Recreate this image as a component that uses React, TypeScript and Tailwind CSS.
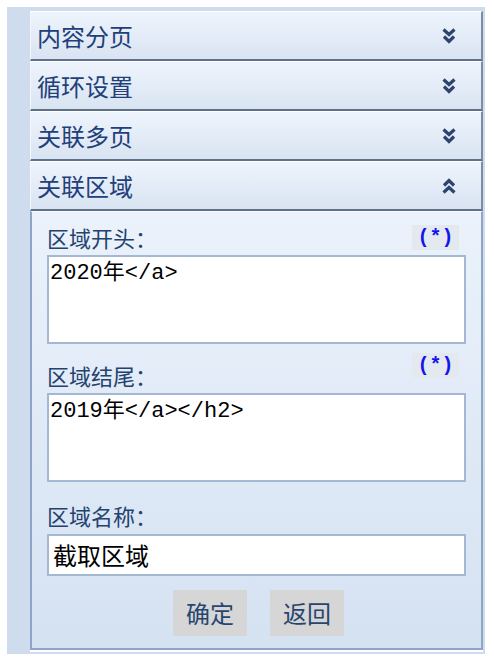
import React from 'react'

const FONT = { fontFamily: '"Noto Sans CJK SC", "Noto Sans", sans-serif' }
const MONO = { fontFamily: '"Liberation Mono", "Noto Sans CJK SC", monospace' }

function ChevronsDown({ up = false }: { up?: boolean }) {
  return (
    <svg width="14" height="16" viewBox="0 0 14 16" className={up ? 'rotate-180' : ''}>
      <polyline points="1.5,1.5 7,6.5 12.5,1.5" fill="none" stroke="#2e4470" strokeWidth="3.2" strokeLinejoin="miter" />
      <polyline points="2,8.5 7,13.5 12,8.5" fill="none" stroke="#2e4470" strokeWidth="3.2" strokeLinejoin="miter" />
    </svg>
  )
}

function Header({ title, open = false }: { title: string; open?: boolean }) {
  return (
    <div className="h-[50px] flex items-center justify-between pl-[6px] pr-[25px] bg-gradient-to-b from-[#eef4fc] to-[#d9e4f2] border-t border-t-white border-l border-l-[#f4f8fd] border-r-2 border-r-[#7d8ca2] border-b-2 border-b-[#5f7089]">
      <span className="text-[24px] leading-none text-[#21407a]">{title}</span>
      <ChevronsDown up={open} />
    </div>
  )
}

function Required() {
  return (
    <span className="w-[47px] h-[25px] bg-[#e4e9f0] text-[#1414f0] text-[20px] font-bold leading-[25px] text-center" style={MONO}>
      (*)
    </span>
  )
}

export default function App() {
  return (
    <div className="min-h-screen bg-white pt-[7px]" style={FONT}>
      <div className="w-[478px] ml-[7px] h-[647px] bg-[#cfdcee] pl-[23px] pr-[2px] pt-[4px]">
        <Header title="内容分页" />
        <Header title="循环设置" />
        <Header title="关联多页" />
        <Header title="关联区域" open />

        {/* 关联区域 panel */}
        <div className="bg-gradient-to-b from-[#ebf2fb] to-[#d5e2f2] border-l-2 border-l-[#8ea5c6] border-r-2 border-r-[#8ea5c6] border-b-2 border-b-[#8ea5c6] border-t border-t-[#f6f9fd] px-[15px] pt-[10px] pb-[12px]">
          <div className="h-[30px] flex items-center justify-between">
            <span className="text-[22px] leading-[30px] text-[#24426e]">区域开头：</span>
            <span className="mr-[7px] flex"><Required /></span>
          </div>
          <div className="mt-[3px] h-[89px] bg-white border-2 border-[#a5b8d3] px-[1px] pt-[3px] text-[22px] leading-[28px] text-black" style={MONO}>
            2020年&lt;/a&gt;
          </div>

          <div className="h-[46px] flex justify-between">
            <span className="self-end text-[22px] leading-[30px] text-[#24426e]">区域结尾：</span>
            <span className="mt-[9px] mr-[7px] flex self-start"><Required /></span>
          </div>
          <div className="mt-[3px] h-[89px] bg-white border-2 border-[#a5b8d3] px-[1px] pt-[3px] text-[22px] leading-[28px] text-black" style={MONO}>
            2019年&lt;/a&gt;&lt;/h2&gt;
          </div>

          <div className="mt-[18px] h-[30px] flex items-center">
            <span className="text-[22px] leading-[30px] text-[#24426e]">区域名称：</span>
          </div>
          <div className="mt-[4px] h-[42px] bg-white border-2 border-[#a5b8d3] px-[4px] flex items-center text-[24px] leading-none text-black">
            截取区域
          </div>

          <div className="mt-[14px] flex justify-center gap-[23px] pl-[4px]">
            <button className="w-[74px] h-[46px] bg-[#d6d6d6] text-[24px] leading-none text-[#26466f]">确定</button>
            <button className="w-[74px] h-[46px] bg-[#d6d6d6] text-[24px] leading-none text-[#26466f]">返回</button>
          </div>
        </div>
        <div className="h-[2px] bg-white" />
      </div>
    </div>
  )
}
